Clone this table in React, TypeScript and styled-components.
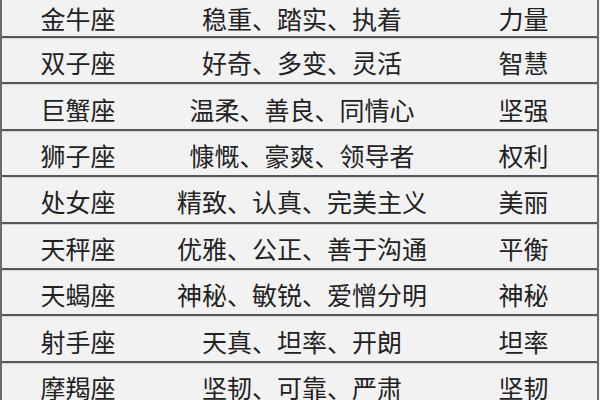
import React from 'react'
import styled, { createGlobalStyle } from 'styled-components'

const GlobalStyle = createGlobalStyle`
  html, body {
    margin: 0;
    padding: 0;
    background: #f2f2f2;
    overflow: hidden;
  }
`;

const Table = styled.div`
  width: 599px;
  height: 400px;
  overflow: hidden;
  box-sizing: border-box;
  border-left: 2px solid #6a6a6a;
  border-right: 2px solid #6a6a6a;
  background: #f2f2f2;
  font-family: "Noto Sans CJK SC", "Noto Sans", sans-serif;
  color: #222;
`;

const Row = styled.div<{ $first?: boolean }>`
  display: grid;
  grid-template-columns: 152px 296px 1fr;
  align-items: center;
  height: ${p => (p.$first ? '38px' : '46.4px')};
  box-sizing: border-box;
  border-bottom: 2px solid #585858;
  box-shadow: 0 1px 0 #d6d6d6;
`;

const Cell = styled.div<{ $first?: boolean }>`
  text-align: center;
  font-size: 25px;
  line-height: 1;
  padding-top: ${p => (p.$first ? '1px' : '5px')};
  white-space: nowrap;
`;

const data = [
  ['金牛座', '稳重、踏实、执着', '力量'],
  ['双子座', '好奇、多变、灵活', '智慧'],
  ['巨蟹座', '温柔、善良、同情心', '坚强'],
  ['狮子座', '慷慨、豪爽、领导者', '权利'],
  ['处女座', '精致、认真、完美主义', '美丽'],
  ['天秤座', '优雅、公正、善于沟通', '平衡'],
  ['天蝎座', '神秘、敏锐、爱憎分明', '神秘'],
  ['射手座', '天真、坦率、开朗', '坦率'],
  ['摩羯座', '坚韧、可靠、严肃', '坚韧'],
];

const App = () => {
  return (
    <>
      <GlobalStyle />
      <Table>
        {data.map((row, i) => (
          <Row key={i} $first={i === 0}>
            {row.map((text, j) => (
              <Cell key={j} $first={i === 0}>{text}</Cell>
            ))}
          </Row>
        ))}
      </Table>
    </>
  )
}

export default App
